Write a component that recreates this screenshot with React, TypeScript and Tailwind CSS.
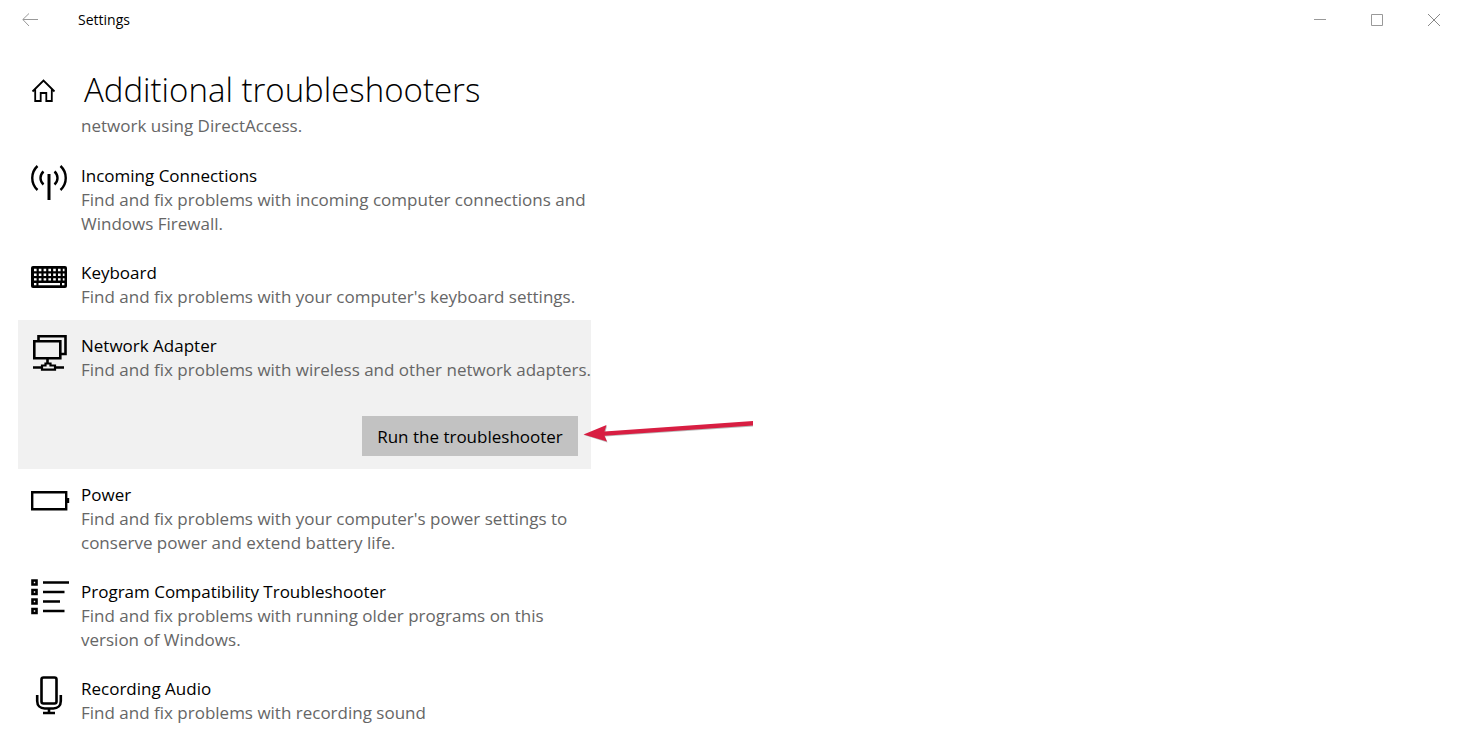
import React from 'react';

type Troubleshooter = {
  title: string;
  lines: string[];
  icon: React.ReactNode;
  selected?: boolean;
};

const AntennaIcon = () => (
  <svg width="40" height="40" viewBox="0 0 40 40" fill="none" stroke="#000" strokeWidth="2.4" aria-hidden="true">
    <path d="M19 10v26" strokeWidth="3" />
    <path d="M13.500 7.500c-4 3.600-4 9.400 0 13M24.500 7.500c4 3.600 4 9.400 0 13" />
    <path d="M7.500 2c-7 6.500-7 17.500 0 24M30.500 2c7 6.500 7 17.500 0 24" />
  </svg>
);

const KeyboardIcon = () => (
  <svg width="40" height="40" viewBox="0 1 40 40" aria-hidden="true">
    <rect x="1" y="6" width="36" height="22" rx="2" fill="#000" />
    <g stroke="#fff" strokeWidth="2.4" strokeDasharray="2.6 2.2">
      <path d="M4 10h30.500M4 14.700h30.500M4 19.400h30.500" />
    </g>
    <path d="M4 24.200h2.400M8.500 24.200h21.500M32 24.200h2.400" stroke="#fff" strokeWidth="2.2" />
  </svg>
);

const NetworkIcon = () => (
  <svg width="40" height="40" viewBox="0 0 40 40" fill="none" stroke="#000" strokeWidth="2.6" aria-hidden="true">
    <path d="M8.500 7V2.300h27V20H31" />
    <path d="M4.300 7.300h26v17h-26zM17.500 24.500v5M3 33.500h8.500M25 33.500h9" />
    <path d="M12 31.500h3.500v-2h5v2H25v4.200H12z" strokeWidth="2.2" />
  </svg>
);

const BatteryIcon = () => (
  <svg width="40" height="40" viewBox="0 0 40 40" fill="none" stroke="#000" strokeWidth="2.4" aria-hidden="true">
    <path d="M2.200 9.200h34v17h-34z" />
    <path d="M38 15v5" />
  </svg>
);

const ListIcon = () => (
  <svg
    className="overflow-visible"
    width="40"
    height="40"
    viewBox="0 1 40 40"
    fill="none"
    stroke="#000"
    strokeWidth="2.6"
    aria-hidden="true"
  >
    <path d="M2.500 1.500h4v4h-4zM2.500 11h4v4h-4zM2.500 20.500h4v4h-4zM2.500 30h4v4h-4z" />
    <path d="M13 3.500h26M13 13h21.500M13 22.500h17M13 32h21.500" />
  </svg>
);

const MicrophoneIcon = () => (
  <svg
    className="overflow-visible"
    width="40"
    height="40"
    viewBox="0 1 40 40"
    fill="none"
    stroke="#000"
    strokeWidth="2.6"
    aria-hidden="true"
  >
    <rect x="11.500" y="1.500" width="15" height="26" rx="2" />
    <path d="M7.200 19v6c0 4.500 3 7.500 7.500 7.500h8.600c4.500 0 7.500-3 7.500-7.500v-6M19 32.500V37M13 37h12" />
  </svg>
);

const troubleshooters: Troubleshooter[] = [
  {
    title: 'Incoming Connections',
    lines: ['Find and fix problems with incoming computer connections and', 'Windows Firewall.'],
    icon: <AntennaIcon />,
  },
  {
    title: 'Keyboard',
    lines: ["Find and fix problems with your computer's keyboard settings."],
    icon: <KeyboardIcon />,
  },
  {
    title: 'Network Adapter',
    lines: ['Find and fix problems with wireless and other network adapters.'],
    icon: <NetworkIcon />,
    selected: true,
  },
  {
    title: 'Power',
    lines: ["Find and fix problems with your computer's power settings to", 'conserve power and extend battery life.'],
    icon: <BatteryIcon />,
  },
  {
    title: 'Program Compatibility Troubleshooter',
    lines: ['Find and fix problems with running older programs on this', 'version of Windows.'],
    icon: <ListIcon />,
  },
  {
    title: 'Recording Audio',
    lines: ['Find and fix problems with recording sound'],
    icon: <MicrophoneIcon />,
  },
];

const TitleBar = () => (
  <header className="flex h-10 items-center justify-between pr-px">
    <div className="flex items-center">
      <button aria-label="Back" className="flex h-10 w-[60px] items-center justify-center">
        <svg width="16" height="14" viewBox="0 0 16 14" fill="none" stroke="#999">
          <path d="M7 .5.800 6.500 7 13M1 6.500h15" />
        </svg>
      </button>
      <span className="ml-[18px] text-sm">Settings</span>
    </div>
    <div className="flex">
      <button aria-label="Minimize" className="flex h-10 w-[57px] items-center justify-center">
        <svg width="12" height="12" viewBox="0 0 12 12" fill="none" stroke="#999">
          <path d="M0 5.500h12" />
        </svg>
      </button>
      <button aria-label="Maximize" className="flex h-10 w-[57px] items-center justify-center">
        <svg width="12" height="12" viewBox="0 0 12 12" fill="none" stroke="#999">
          <path d="M.5.5h11v11H.5z" />
        </svg>
      </button>
      <button aria-label="Close" className="flex h-10 w-[57px] items-center justify-center">
        <svg width="12" height="12" viewBox="0 0 12 12" fill="none" stroke="#888">
          <path d="m0 0 12 12M12 0 0 12" />
        </svg>
      </button>
    </div>
  </header>
);

const PointerArrow = () => (
  <svg
    className="pointer-events-none absolute top-0 left-full ml-1"
    width="176"
    height="32"
    viewBox="0 0 176 32"
    aria-hidden="true"
  >
    <path d="M2 19 25 10l-1.500 6L171 6v4.500L23 20.500l2.500 6z" fill="#777" opacity=".5" />
    <path d="M1.500 18.500 24.500 9l-2 6.500L171 5v4.500L22.500 19.800 25 25.500z" fill="#d81e42" />
  </svg>
);

const TroubleshooterItem = ({ title, lines, icon, selected }: Troubleshooter) => (
  <li className={`pt-[14px] pr-[13px] pl-3 ${selected ? 'bg-[#f1f1f1] pb-[13px]' : 'pb-[11px]'}`}>
    <div className="flex">
      <div className="w-[51px] shrink-0">{icon}</div>
      <div className="whitespace-nowrap leading-6">
        <h2>{title}</h2>
        <p className="text-[#666]">
          {lines.map((line) => (
            <span key={line} className="block">{line}</span>
          ))}
        </p>
      </div>
    </div>
    {selected && (
      <div className="mt-[34px] flex justify-end">
        <div className="relative">
          <button className="h-10 w-[216px] bg-[#c2c2c2] pt-0.5">Run the troubleshooter</button>
          <PointerArrow />
        </div>
      </div>
    )}
  </li>
);

export default function App() {
  return (
    <div className="flex min-h-screen flex-col bg-white font-['Open_Sans','Noto_Sans',sans-serif] text-[17px] text-black">
      <TitleBar />
      <div className="flex h-20 items-center pt-5 pl-[31px]">
        <a href="#home" aria-label="Home" className="w-[53px]">
          <svg width="26" height="26" viewBox="0 0 26 26" fill="none" stroke="#000" strokeWidth="1.8">
            <path d="M1.500 14.500 12.500 3.500 23.500 14.500M4.200 12v12h5.500v-8h5.600v8h5.500V12" />
          </svg>
        </a>
        <h1 className="text-[33px] font-light">Additional troubleshooters</h1>
      </div>
      <main className="overflow-hidden pl-[18px]">
        {/* tail of the entry scrolled under the heading */}
        <p className="-mt-1.5 pb-3 pl-[63px] leading-6 text-[#666]">network using DirectAccess.</p>
        <ul className="w-full max-w-[573px]">
          {troubleshooters.map((item) => (
            <TroubleshooterItem key={item.title} {...item} />
          ))}
        </ul>
      </main>
    </div>
  );
}
